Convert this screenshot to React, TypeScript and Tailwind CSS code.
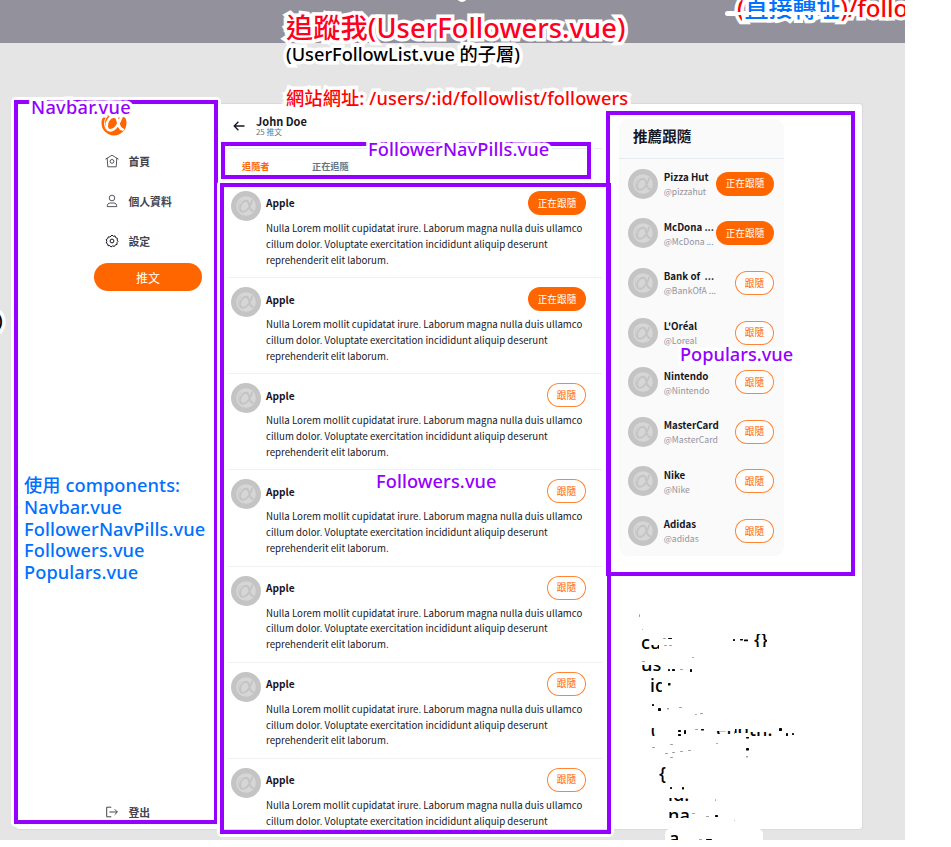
import React from "react";

const UI = "font-['Noto_Sans_CJK_TC',sans-serif]";
const NOTE =
  "absolute whitespace-pre leading-none font-['Noto_Sans','Noto_Sans_CJK_TC',sans-serif] [paint-order:stroke_fill] [-webkit-text-stroke:7px_white] [stroke-linejoin:round]";

const followers = [true, true, false, false, false, false, false];

const populars = [
  { name: "Pizza Hut", handle: "@pizzahut", on: true },
  { name: "McDona ...", handle: "@McDona ...", on: true },
  { name: "Bank of  ...", handle: "@BankOfA ...", on: false },
  { name: "L'Oréal", handle: "@Loreal", on: false },
  { name: "Nintendo", handle: "@Nintendo", on: false },
  { name: "MasterCard", handle: "@MasterCard", on: false },
  { name: "Nike", handle: "@Nike", on: false },
  { name: "Adidas", handle: "@adidas", on: false },
];

function Alpha({ stroke, width }: { stroke: string; width: number }) {
  return (
    <g fill="none" stroke={stroke} strokeWidth={width} strokeLinecap="round">
      <path d="M21.3 9.3C19.6 14 16.2 20.9 12 20.9C8.6 20.9 8.2 15.8 10.8 12.2C13.3 8.8 17.2 8.9 17.9 12.8C18.5 16.3 19 19.6 22 20.2" />
      <path d="M9.5 9.6C7.2 12 6.6 16.6 8.6 19.6" strokeWidth="0.8" />
    </g>
  );
}

function Avatar() {
  return (
    <svg className="size-[30px] shrink-0" viewBox="0 0 30 30">
      <circle cx="15" cy="15" r="15" fill="#c4c4c4" />
      <circle cx="15" cy="15" r="9.8" fill="#d6d6d6" />
      <Alpha stroke="#c4c4c4" width={1.9} />
    </svg>
  );
}

function FollowButton({ on }: { on: boolean }) {
  return on ? (
    <button className="flex h-6 w-[58px] shrink-0 items-center justify-center rounded-full bg-[#ff6600] pt-px text-[9.7px] leading-none text-white">
      正在跟隨
    </button>
  ) : (
    <button className="flex h-6 w-[39px] shrink-0 items-center justify-center rounded-full border border-[#ff6600]/80 bg-white pt-px text-[9.7px] leading-none text-[#ff6600]">
      跟隨
    </button>
  );
}

function HomeIcon() {
  return (
    <svg className="size-[14px]" viewBox="0 0 14 14" fill="none" stroke="#44444f" strokeWidth="0.9">
      <path d="M0.8 5L7 1.2L13.2 5M2.2 4.4L2.8 12.8H11.2L11.8 4.4" strokeLinecap="round" strokeLinejoin="round" />
      <circle cx="7" cy="7.4" r="1.9" />
    </svg>
  );
}

function UserIcon() {
  return (
    <svg className="size-[14px]" viewBox="0 0 14 14" fill="none" stroke="#44444f" strokeWidth="0.9">
      <circle cx="7" cy="4" r="2.8" />
      <path d="M2.2 12.6C2.2 10.4 3.4 9 5.2 9H8.8C10.6 9 11.8 10.4 11.8 12.6Z" strokeLinejoin="round" />
    </svg>
  );
}

function GearIcon() {
  return (
    <svg className="size-[14px]" viewBox="0 0 14 14" fill="none" stroke="#171725" strokeWidth="1">
      <path
        d="M7 1L8.3 2.3L10.1 1.9L10.7 3.7L12.5 4.4L12.1 6.1L13 7.3L11.9 8.7L12.1 10.4L10.3 10.9L9.4 12.4L7.7 11.9L6 13L4.9 11.6L3 11.7L2.7 9.9L1.2 9L1.8 7.3L1.1 5.6L2.7 4.7L3.2 2.9L5.1 3Z"
        strokeLinejoin="round"
      />
      <circle cx="7" cy="7" r="1.9" />
    </svg>
  );
}

function LogoutIcon() {
  return (
    <svg className="size-[14px]" viewBox="0 0 14 14" fill="none" stroke="#44444f" strokeWidth="1">
      <path d="M6.3 2.2H1.7V11.8H6.3M4.4 7H12.3M9.7 4.3L12.4 7L9.7 9.7" />
    </svg>
  );
}

function NavItem({ icon, label }: { icon: React.ReactNode; label: string }) {
  return (
    <div className="flex h-[40px] items-center gap-[10px] text-[10.8px] font-bold leading-none text-[#44444f]">
      {icon}
      <span>{label}</span>
    </div>
  );
}

function Navbar() {
  return (
    <nav className="flex w-[212px] shrink-0 flex-col pl-[78px]">
      <svg className="ml-[7px] mt-[6px] size-[26px]" viewBox="4.6 4.6 20.8 20.8">
        <circle cx="15" cy="15" r="10" fill="#ff6600" />
        <Alpha stroke="white" width={2.1} />
      </svg>
      <div className="mt-[5px] flex flex-col pl-[10.5px]">
        <NavItem icon={<HomeIcon />} label="首頁" />
        <NavItem icon={<UserIcon />} label="個人資料" />
        <NavItem icon={<GearIcon />} label="設定" />
      </div>
      <button className="mt-[2px] flex h-7 w-[108px] items-center justify-center rounded-full bg-[#ff6600] pt-[2px] text-[12px] leading-none text-white">
        推文
      </button>
      <div className="-mb-[3px] mt-auto pl-[10.5px]">
        <NavItem icon={<LogoutIcon />} label="登出" />
      </div>
    </nav>
  );
}

function FollowerRow({ on }: { on: boolean }) {
  return (
    <article className="flex h-[96.15px] shrink-0 border-b border-[#f1f1f1] pl-[3px] pt-[9px]">
      <Avatar />
      <div className="ml-[5px] flex-1">
        <div className="flex h-6 items-center justify-between pr-4">
          <span className="pt-px text-[10.1px] font-bold leading-none text-[#171725]">Apple</span>
          <FollowButton on={on} />
        </div>
        <p className="mt-[6px] whitespace-pre text-[9.69px] leading-[15.8px] text-[#171725]">
          {"Nulla Lorem mollit cupidatat irure. Laborum magna nulla duis ullamco\ncillum dolor. Voluptate exercitation incididunt aliquip deserunt\nreprehenderit elit laborum."}
        </p>
      </div>
    </article>
  );
}

function Feed() {
  return (
    <main className="flex w-[374px] shrink-0 flex-col overflow-hidden">
      <header className="flex h-[45px] shrink-0 items-center border-b border-[#e6ecf0] pl-[5px]">
        <svg className="size-3" viewBox="0 0 12 12" fill="none" stroke="#171725" strokeWidth="1.3">
          <path d="M11.5 6H1.2M5.4 1.8L1.2 6L5.4 10.2" />
        </svg>
        <div className="ml-[11px] flex flex-col">
          <span className="text-[11px] font-bold leading-[12px] text-[#171725]">John Doe</span>
          <span className="text-[7.8px] leading-[10px] text-[#657786]">25 推文</span>
        </div>
      </header>
      <div className="flex h-[33px] shrink-0 items-center pl-[14px] pt-[2px] text-[9.2px] font-bold leading-none">
        <span className="w-[70px] text-[#ff6600]">追隨者</span>
        <span className="text-[#657786]">正在追隨</span>
      </div>
      <div className="flex flex-col">
        {followers.map((on, i) => (
          <FollowerRow key={i} on={on} />
        ))}
      </div>
    </main>
  );
}

function Populars() {
  return (
    <aside className="ml-[17px] mt-[15px] flex h-[437px] w-[165px] shrink-0 flex-col rounded-[9px] bg-[#fafafb]">
      <h2 className="flex h-[40px] shrink-0 items-center border-b border-[#e6ecf0] pb-1 pl-[14px] text-[14.6px] font-bold leading-none text-[#171725]">
        推薦跟隨
      </h2>
      {populars.map((p) => (
        <div key={p.handle} className="flex h-[49.6px] shrink-0 items-center pl-[9.4px] pr-[10px]">
          <Avatar />
          <div className="ml-[5.3px] flex w-0 flex-1 flex-col gap-[3px] whitespace-pre pt-[2px]">
            <span className="text-[9.75px] font-bold leading-[11px] text-[#171725]">{p.name}</span>
            <span className="text-[8.65px] leading-[11px] text-[#92929d]">{p.handle}</span>
          </div>
          <FollowButton on={p.on} />
        </div>
      ))}
    </aside>
  );
}

function Frame({ className }: { className: string }) {
  return (
    <div className={`absolute rounded-[5px] border-[3px] border-white ${className}`}>
      <div className="size-full border-4 border-[#9500ff]" />
    </div>
  );
}

type Bit = { t: string; x: number; base: number; cx: number; cy: number; w: number; h: number };

// Each entry shows a small window (cx, cy, w, h) of a word whose baseline is at (x, base).
const bits: Bit[] = [
  { t: "cu", x: 641, base: 649, cx: 640, cy: 638, w: 10, h: 12 },
  { t: "cu", x: 641, base: 649, cx: 651, cy: 645, w: 8, h: 4 },
  { t: "{}", x: 754, base: 646, cx: 754, cy: 634, w: 13, h: 13 },
  { t: "us", x: 641, base: 671, cx: 640, cy: 665, w: 22, h: 7 },
  { t: "id", x: 650, base: 692, cx: 649, cy: 678, w: 6, h: 15 },
  { t: "id", x: 650, base: 692, cx: 655, cy: 682, w: 7, h: 11 },
  { t: "(", x: 651, base: 736, cx: 651, cy: 728, w: 6, h: 8 },
  { t: "ength.", x: 716, base: 736, cx: 716, cy: 731, w: 19, h: 3 },
  { t: "ength.", x: 716, base: 736, cx: 735, cy: 729, w: 14, h: 4 },
  { t: "ength.", x: 716, base: 736, cx: 749, cy: 732, w: 25, h: 5 },
  { t: "{", x: 659, base: 780, cx: 659, cy: 766, w: 8, h: 17 },
  { t: "id:", x: 668, base: 801, cx: 668, cy: 798, w: 22, h: 4 },
  { t: "na", x: 668, base: 822, cx: 668, cy: 812, w: 22, h: 6 },
  { t: "a", x: 669, base: 845, cx: 668, cy: 834, w: 10, h: 6 },
];

const specks: [number, number, number, number][] = [
  [639, 614, 1, 3], [642, 629, 1, 1], [663, 638, 3, 1], [668, 638, 4, 1], [664, 645, 3, 1], [669, 645, 3, 1],
  [733, 639, 2, 2], [740, 639, 3, 1.5], [744, 639.5, 4, 1.8], [642, 661, 3, 1], [692, 657, 2, 1],
  [668, 669, 2, 2], [672, 669, 3, 2], [680, 669, 3, 1], [690, 669, 2, 3], [668, 683, 2.5, 2.5],
  [652, 704, 2, 2], [658, 708, 3, 3], [667, 708, 2, 1.5], [679, 707, 3, 1], [695, 714, 2, 1], [700, 713, 3, 1],
  [678, 730, 3, 2], [678, 734, 3, 2], [684, 730, 2, 4], [695, 729, 3, 1], [701, 729, 3, 1.5],
  [746, 737, 3, 1.5], [779, 728, 3, 3], [786, 733, 2, 3], [792, 733, 2, 2], [652, 747, 3, 1], [670, 744, 3, 1], [716, 743, 2, 1],
  [665, 753, 3, 1], [672, 752, 3, 1], [680, 751, 3, 1], [688, 750, 3, 1],
  [746, 748, 3, 2.5], [746, 756, 2, 1.5], [670, 757, 3, 1], [670, 787, 2, 2], [682, 787, 2, 2.5],
  [715, 799, 1, 2], [692, 813, 3, 1], [706, 816, 3, 1], [715, 815, 3, 2], [734, 820, 1, 1], [699, 839, 3, 1], [706, 839, 6, 1],
];

function ErasedCode() {
  return (
    <>
      {bits.map((b, i) => (
        <div key={i} className="absolute overflow-hidden" style={{ left: b.cx, top: b.cy, width: b.w, height: b.h }}>
          <span
            className="absolute whitespace-pre font-['Noto_Sans',sans-serif] text-[18.2px] font-medium leading-[20px] text-black"
            style={{ left: b.x - b.cx, top: b.base - b.cy - 17 }}
          >
            {b.t}
          </span>
        </div>
      ))}
      <svg className="absolute left-0 top-0 h-[847px] w-[951px]" viewBox="0 0 951 847">
        {specks.map(([x, y, w, h], i) => (
          <rect key={i} x={x} y={y} width={w} height={h} rx="0.4" fill="black" fillOpacity={w * h > 3.9 ? 1 : 0.4} />
        ))}
      </svg>
    </>
  );
}

export default function App() {
  return (
    <div className={`relative h-[847px] w-[951px] overflow-hidden bg-white ${UI}`}>
      <div className="relative h-[840px] w-[905px] overflow-hidden bg-[#e5e5e5]">
        <div className="h-[43px] bg-[#93929c]" />
        <div className="ml-4 mt-[61px] flex h-[725px] w-[846px] overflow-hidden rounded-[3px] bg-white shadow-[0_0_1px_1px_#d9d9de]">
          <Navbar />
          <Feed />
          <Populars />
        </div>

        <Frame className="left-[11px] top-[97px] h-[730px] w-[210px]" />
        <Frame className="left-[218px] top-[139px] h-[43px] w-[376px]" />
        <Frame className="left-[217px] top-[180px] h-[657px] w-[397px]" />
        <div className="absolute left-[606px] top-[111px] h-[465px] w-[249px] border-4 border-[#9500ff]" />

        <div className="absolute left-[665px] top-[829px] h-3 w-[98px] rounded-t-[5px] bg-white" />
        <ErasedCode />

        <div className="absolute left-[457px] top-[-8px] size-[10px] rounded-full bg-white" />
        <div className={`${NOTE} left-[286px] top-[14px] text-[27.2px] font-medium tracking-[0.1px] text-[#ff001e]`}>
          追蹤我(UserFollowers.vue)
        </div>
        <div className={`${NOTE} left-[286px] top-[45px] text-[18.2px] font-medium text-black`}>(UserFollowList.vue 的子層)</div>
        <div className={`${NOTE} left-[286px] top-[89px] text-[18.2px] font-medium tracking-[0.14px] text-[#ff0000]`}>
          網站網址: /users/:id/followlist/followers
        </div>
        <div className="absolute left-[725px] top-[11px] h-[5px] w-[180px] rounded-full bg-white" />
        <div className={`${NOTE} left-[737px] top-[-4px] text-[24px] font-medium text-[#ff0000]`}>
          (<span className="text-[#0070ff]">直接轉址</span>)/follo
        </div>
        <div className="absolute left-[735px] top-[12px] h-[3px] w-[122px] bg-white" />
        <div className={`${NOTE} left-[-3px] top-[311px] text-[18.2px] font-medium text-black`}>)</div>
        <div className={`${NOTE} left-[31px] top-[98px] text-[18.2px] font-medium tracking-[0.3px] text-[#9500ff]`}>Navbar.vue</div>
        <div className={`${NOTE} left-[368px] top-[140px] text-[18.2px] font-medium tracking-[0.1px] text-[#9500ff]`}>FollowerNavPills.vue</div>
        <div className={`${NOTE} left-[376px] top-[472px] text-[18.2px] font-medium tracking-[0.1px] text-[#9500ff]`}>Followers.vue</div>
        <div className={`${NOTE} left-[680px] top-[345px] text-[18.2px] font-medium text-[#9500ff]`}>Populars.vue</div>
        <div className={`${NOTE} left-[24px] top-[475px] text-[18.2px] font-medium !leading-[21.8px] tracking-[0.1px] text-[#0070ff]`}>
          {"使用 components:\nNavbar.vue\nFollowerNavPills.vue\nFollowers.vue\nPopulars.vue"}
        </div>
      </div>
    </div>
  );
}
